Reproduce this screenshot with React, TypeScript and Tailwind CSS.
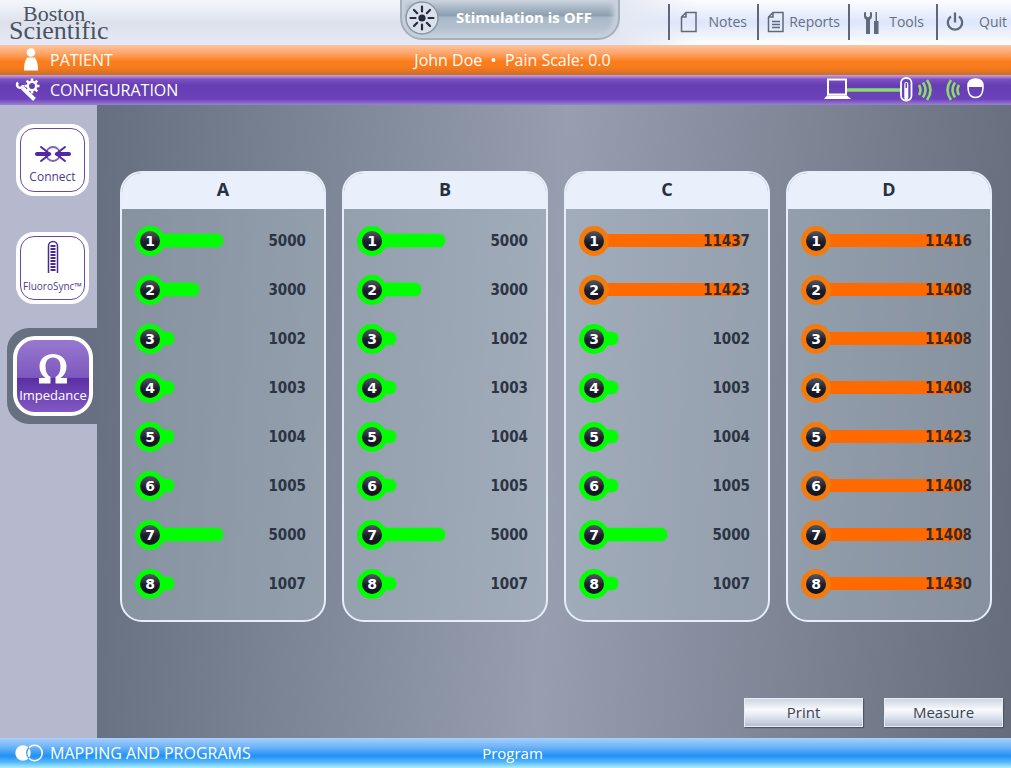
import type { ReactNode } from 'react'
import clsx from 'clsx'

interface IContact {
  id: number
  value: number
}

interface ILead {
  name: string
  contacts: IContact[]
}

const toContacts = (values: number[]): IContact[] => values.map((value, i) => ({ id: i + 1, value }))

const leads: ILead[] = [
  { name: 'A', contacts: toContacts([5000, 3000, 1002, 1003, 1004, 1005, 5000, 1007]) },
  { name: 'B', contacts: toContacts([5000, 3000, 1002, 1003, 1004, 1005, 5000, 1007]) },
  { name: 'C', contacts: toContacts([11437, 11423, 1002, 1003, 1004, 1005, 5000, 1007]) },
  { name: 'D', contacts: toContacts([11416, 11408, 11408, 11408, 11423, 11408, 11408, 11430]) },
]

const HIGH_IMPEDANCE = 10000

// the bar starts under the badge, so even a small value gets a short stub
const barWidth = (value: number) => `${Math.min(7.8 + (value / 1000) * 7.8, 95)}%`

const Logo = () => (
  <a href="#home" className="flex flex-col pl-[9px] pt-[5px] font-['Liberation_Serif',serif] text-[#4b5263]">
    <span className="pl-[14px] text-[22px] leading-[18px]">Boston</span>
    <span className="text-[26px] leading-[15px]">Scientific</span>
  </a>
)

const StimulationBadge = () => (
  <div className="flex h-10 items-center gap-[17px] rounded-b-[22px] border-x-2 border-b-2 border-[#a7afbd] bg-[linear-gradient(#cdd5de_0px,#bcc7d3_3px,#8c9dad_16px,#a9b8c8_17px,#b3c0ce_28px,#c3ced9_36px)] pb-[3px] pl-[3px] shadow-[inset_5px_0_5px_#c8d2de,inset_-5px_0_5px_#c8d2de]">
    <svg viewBox="0 0 34 34" className="h-[34px] w-[34px] shrink-0" aria-hidden>
      <circle cx="17" cy="17" r="16" fill="#d9e1ec" stroke="#8d97a8" strokeWidth="1.500" />
      <circle cx="17" cy="17" r="3.600" fill="#252b3c" />
      <g stroke="#252b3c" strokeWidth="2.200" strokeLinecap="round">
        <path d="M17 5.500v5M17 23.500v5M5.500 17h5M23.500 17h5M9 9l3.200 3.200M21.800 21.800l3.200 3.200M9 25l3.200-3.200M21.800 12.200l3.200-3.200" />
      </g>
    </svg>
    <span className="whitespace-nowrap text-[15px] font-bold text-white">Stimulation is OFF</span>
  </div>
)

const NavItem = ({ label, className, children }: { label: string; className?: string; children: ReactNode }) => (
  <button type="button" className={clsx('flex h-9 items-center justify-between border-l-2 border-[#5f6779] text-sm text-[#667080]', className)}>
    <svg viewBox="0 0 20 24" className="h-6 w-5 shrink-0" fill="none" stroke="#5f6a7a" strokeWidth="1.500" aria-hidden>
      {children}
    </svg>
    {label}
  </button>
)

const Header = () => (
  <header className="grid h-[45px] grid-cols-[400fr_220px_391fr] bg-[linear-gradient(#f4f8fd,#dce1ec_50%,#e6e9f5)]">
    <Logo />
    <StimulationBadge />
    <nav className="flex items-start justify-end bg-[linear-gradient(90deg,#e4e8f3,transparent_20%),linear-gradient(#fdfdff,#dde6fb_50%,#fdfdff)] pt-1">
      <NavItem label="Notes" className="w-[89px] pr-[10px] pl-[9px]">
        <path d="M7 2.500h10v19H2.500V7zM7 2.500V7H2.500" />
      </NavItem>
      <NavItem label="Reports" className="w-[91px] pr-2 pl-[7px]">
        <path d="M7 2.500h10v19H2.500V7zM7 2.500V7H2.500M6 11.500h8M6 14.500h8M6 17.500h8" />
      </NavItem>
      <NavItem label="Tools" className="w-[88px] pr-3 pl-[13px]">
        <g fill="#5f6a7a" stroke="none">
          <path d="M1 2.500v4a4 4 0 0 0 2 3.300V24h4V9.800a4 4 0 0 0 2-3.300v-4L7 2v4L5 7.500 3 6V2z" />
          <path d="M12.500 2h1.500v9h1.500v13H11V11h1.500z" />
        </g>
      </NavItem>
      <NavItem label="Quit" className="w-[75px] pr-1 pl-[7px]">
        <path d="M6 6.500a7.200 7.200 0 1 0 8 0M10 2.500v10" strokeWidth="2.300" />
      </NavItem>
    </nav>
  </header>
)

interface IStepBar {
  title: string
  icon: ReactNode
  className: string
  center?: ReactNode
  right?: ReactNode
}

const StepBar = ({ title, icon, className, center, right }: IStepBar) => (
  <div className={clsx('grid h-[30px] shrink-0 grid-cols-[1fr_auto_1fr] items-center pl-[14px] text-white', className)}>
    <button type="button" className="flex items-center gap-[6px] whitespace-nowrap text-base">
      <svg viewBox="0 0 30 26" className="h-[26px] w-[30px]" aria-hidden>
        {icon}
      </svg>
      {title}
    </button>
    <div>{center}</div>
    <div className="flex justify-end pr-[27px]">{right}</div>
  </div>
)

const PatientIcon = (
  <g fill="#fff">
    <circle cx="17" cy="5.500" r="4.300" />
    <path d="M13.500 10.500h7c2.500 2 3.500 7 3.500 13H10c0-6 1-11 3.500-13z" />
  </g>
)

const ConfigIcon = (
  <g fill="none" stroke="#fff">
    <circle cx="18" cy="9" r="4.200" strokeWidth="2.500" />
    <path d="M18 1.500v3M18 13.500v3M10.500 9h3M22.500 9h3M12.700 3.700l2.100 2.100M21.200 12.200l2.100 2.100M12.700 14.300l2.100-2.100M21.200 5.800l2.100-2.100" strokeWidth="2.500" />
    <path d="M4 5.500a3 3 0 1 0 5 2.500" strokeWidth="2.500" />
    <path d="M8.500 11l12 11.500" strokeWidth="4" />
  </g>
)

const ProgramsIcon = (
  <g>
    <circle cx="9" cy="13" r="7.700" fill="#fff" />
    <circle cx="20.500" cy="13" r="7.700" fill="none" stroke="#fff" strokeWidth="1.600" />
    <path d="M15 7.500a7.700 7.700 0 0 0 0 11" fill="none" stroke="#3a9df5" strokeWidth="1.300" />
  </g>
)

const ConnectionStatus = () => (
  <svg viewBox="0 0 160 28" className="h-7 w-40" fill="none" role="img" aria-label="Connected">
    <path d="M23 14h54" stroke="#8bdc6b" strokeWidth="3.500" />
    <path d="M4 3.500h18v15H4z" stroke="#fff" strokeWidth="2" />
    <path d="M3 19.500h20l4 3.500H0z" fill="#fff" />
    <rect x="77" y="2" width="10.500" height="22.500" rx="5" fill="#6a42b8" stroke="#fff" strokeWidth="1.800" />
    <path d="M82.300 8v14" stroke="#fff" strokeWidth="4" strokeLinecap="round" />
    <path d="M82.300 7v5" stroke="#6a42b8" strokeWidth="1.500" />
    <path d="M95 9q3 5 0 10M99 6.500q5 7.500 0 15M103 4q7 10 0 20M135 9q-3 5 0 10M131 6.500q-5 7.500 0 15M127 4q-7 10 0 20" stroke="#8bdc6b" strokeWidth="2.600" />
    <path d="M144 10c0-5 3-7 7.500-7s7.500 2 7.500 7c0 8-2 11.500-7.500 11.500S144 18 144 10z" stroke="#fff" strokeWidth="1.600" />
    <path d="M144 11c0-6 3-8 7.500-8s7.500 2 7.500 8z" fill="#fff" />
  </svg>
)

const SideButton = ({ label, labelClass, children }: { label: string; labelClass: string; children: ReactNode }) => (
  <button type="button" className="ml-4 h-[72px] w-[73px] rounded-[18px] bg-white p-1">
    <span className="flex h-full flex-col items-center justify-end rounded-[14px] border border-[#6a4aa0] pb-px text-[#4c3d8c]">
      {children}
      <span className={clsx('whitespace-nowrap', labelClass)}>{label}</span>
    </span>
  </button>
)

const Sidebar = () => (
  <aside className="flex w-[97px] shrink-0 flex-col bg-[#b6b9ce] pt-[19px]">
    <SideButton label="Connect" labelClass="text-xs leading-[27px]">
      <svg viewBox="0 0 36 18" className="h-[18px] w-9" fill="none" stroke="#5229a3" strokeLinecap="round" aria-hidden>
        <circle cx="18" cy="9" r="7" stroke="#7b63b5" strokeWidth="1.800" />
        <path d="M2 9h12M22 9h12" strokeWidth="4" />
        <path d="M6 2l9 7-9 7M30 2l-9 7 9 7" strokeWidth="2" />
      </svg>
    </SideButton>
    <div className="h-9" />
    <SideButton label="FluoroSync™" labelClass="text-[10px] leading-[24px]">
      <svg viewBox="0 0 12 34" className="h-[34px] w-3" fill="none" stroke="#4b2a90" aria-hidden>
        <path d="M1.500 33V6a4.500 4.500 0 0 1 9 0v27" strokeWidth="1.500" />
        <path d="M6 5v27" strokeWidth="5" strokeDasharray="2 1" />
      </svg>
    </SideButton>
    <div className="ml-[7px] mt-6 rounded-l-[22px] bg-[#667080] py-2 pl-[6px]">
      <button
        type="button"
        aria-current="page"
        className="flex h-20 w-20 flex-col items-center justify-end rounded-[22px] border-4 border-white bg-[linear-gradient(#9878cf,#7d58be_52%,#5a2fa5_53%,#8258c4)] pb-[6px] text-white"
      >
        <svg viewBox="0 0 30 31" className="h-[31px] w-[30px]" aria-hidden>
          <path
            fill="#fff"
            d="M1 25h6.500C3.500 22 1.500 18.500 1.500 13.500 1.500 6 7 1 15 1s13.500 5 13.500 12.500c0 5-2 8.500-6 11.500H29v5.500H17.500V24c3.500-2 5-5.500 5-10.500C22.500 8 20 4.500 15 4.500S7.500 8 7.500 13.500c0 5 1.500 8.500 5 10.500v6.500H1z"
          />
        </svg>
        <span className="whitespace-nowrap text-[13px] leading-[22px]">Impedance</span>
      </button>
    </div>
  </aside>
)

const ContactRow = ({ id, value }: IContact) => {
  const isHigh = value > HIGH_IMPEDANCE
  return (
    <li className="relative flex h-[49px] items-center justify-between">
      <span className="absolute inset-x-0 pl-[15px]">
        <span
          className={clsx('block h-[13px] rounded-r-md', isHigh ? 'bg-[#ff6a00]' : 'bg-[#00ff00] shadow-[0_0_2px_#00ff00]')}
          style={{ width: barWidth(value) }}
        />
      </span>
      <span
        className={clsx(
          "relative flex h-[30px] w-[30px] items-center justify-center rounded-full border-[5px] bg-[linear-gradient(#555763,#1b1d2b_55%,#11131f)] font-['DejaVu_Sans',sans-serif] text-sm leading-5 font-bold text-white",
          isHigh ? 'border-[#f57a0c]' : 'border-[#00ff00]',
        )}
      >
        {id}
      </span>
      <span className={clsx('relative pt-px', isHigh ? 'text-[#3a2b28]' : 'text-[#2b3442]')}>{value}</span>
    </li>
  )
}

const LeadPanel = ({ name, contacts }: ILead) => (
  <section className="flex-1 overflow-hidden rounded-[22px] border-2 border-[#e6eefb] bg-[#b5c4cc66]">
    <h2 className="h-9 bg-[#e9f0fc] text-center text-lg leading-8 font-bold text-[#263040]">{name}</h2>
    <ul className="pt-[7px] pr-[18px] pb-3 pl-[13px] font-['DejaVu_Sans_Condensed','DejaVu_Sans',sans-serif] text-[15px] font-bold">
      {contacts.map((contact) => (
        <ContactRow key={`${name}_${contact.id}`} {...contact} />
      ))}
    </ul>
  </section>
)

const ActionButton = ({ children }: { children: ReactNode }) => (
  <button
    type="button"
    className="h-[29px] w-[119px] border border-[#e8edf5] bg-[linear-gradient(#cdd6e4,#f8fafd_40%,#e6ebf3_60%,#b4bfd2)] text-[15px] text-[#3b4350] shadow-[1px_1px_1px_#4e5664]"
  >
    {children}
  </button>
)

export default function App() {
  return (
    <div className="flex min-h-screen flex-col font-['Open_Sans','Noto_Sans',sans-serif]">
      <Header />
      <StepBar
        title="PATIENT"
        icon={PatientIcon}
        className="bg-[linear-gradient(#fbc5a0,#fca263_30%,#fd7d1c_55%,#f77b1d_75%,#c96e2a)]"
        center={<span>John Doe&nbsp; •&nbsp; Pain Scale: 0.0</span>}
      />
      <StepBar
        title="CONFIGURATION"
        icon={ConfigIcon}
        className="bg-[linear-gradient(#c9a3e0,#7a50c0_15%,#663db3_35%,#6b42b9_80%,#9b80d4)]"
        right={<ConnectionStatus />}
      />
      <div className="flex flex-1">
        <Sidebar />
        <main className="flex flex-1 flex-col justify-between bg-[linear-gradient(93deg,#656f7f,#969eaf_50%,#656d7d)]">
          <div className="flex gap-4 pt-[66px] pr-[19px] pl-[23px]">
            {leads.map((lead) => (
              <LeadPanel key={lead.name} {...lead} />
            ))}
          </div>
          <div className="flex justify-end gap-[21px] pr-2 pb-[11px]">
            <ActionButton>Print</ActionButton>
            <ActionButton>Measure</ActionButton>
          </div>
        </main>
      </div>
      <StepBar
        title="MAPPING AND PROGRAMS"
        icon={ProgramsIcon}
        className="bg-[linear-gradient(#a8d0fb,#6db3f9_30%,#2191f5_60%,#55b5fa_80%,#aef0fd)]"
        center={<span className="text-[15px]">Program</span>}
      />
    </div>
  )
}
